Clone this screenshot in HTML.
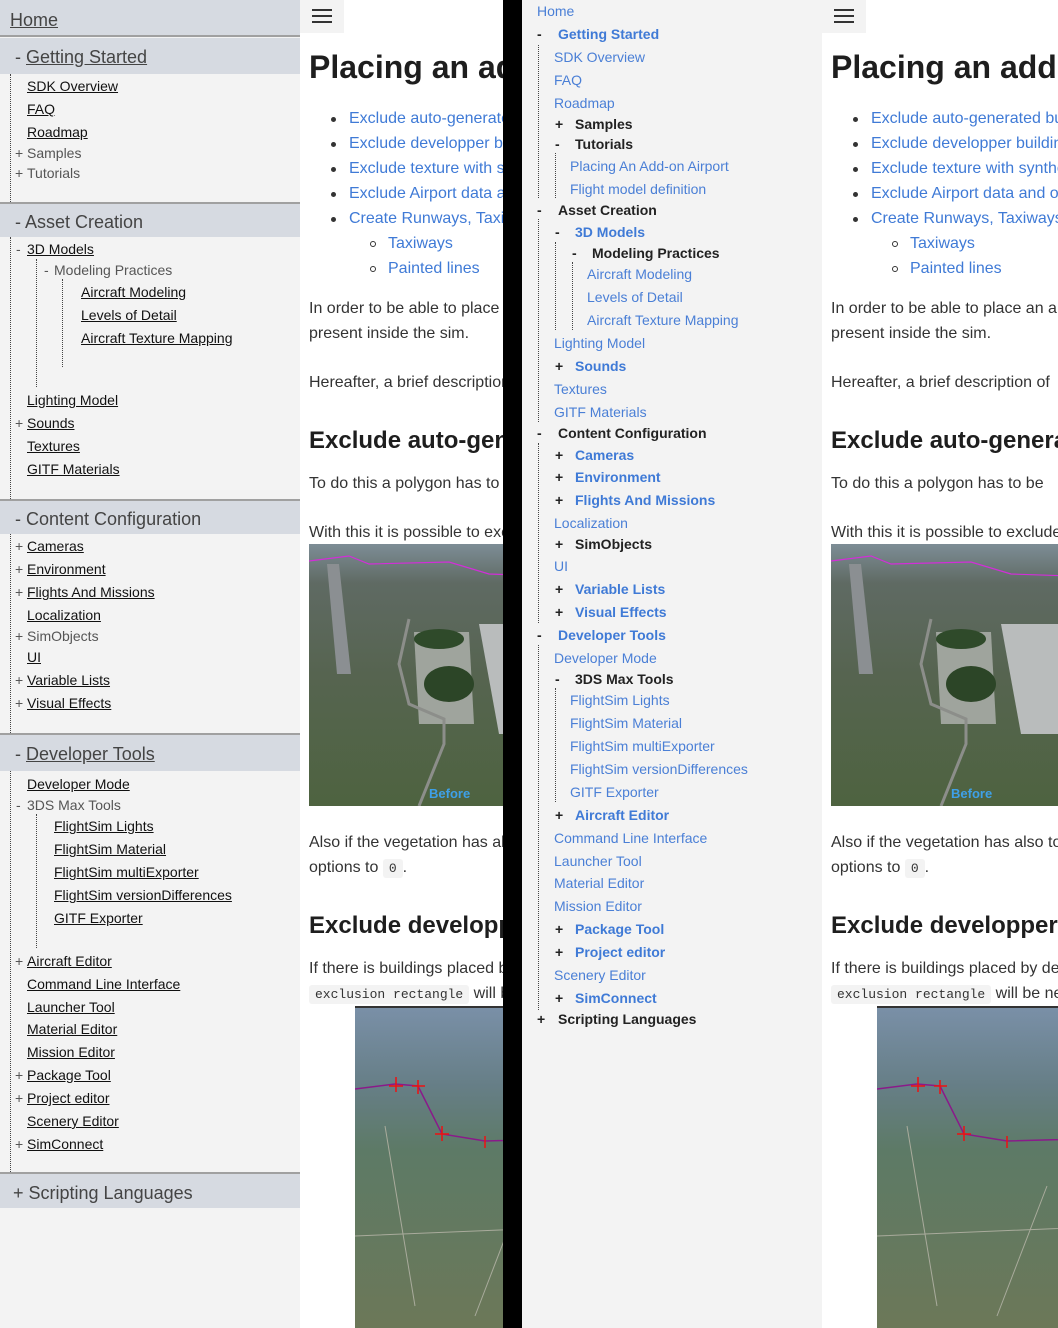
<!DOCTYPE html>
<html><head><meta charset="utf-8">
<style>
*{margin:0;padding:0;box-sizing:border-box}
body{width:1058px;height:1328px;position:relative;overflow:hidden;background:#fff;font-family:"Segoe UI","Liberation Sans",sans-serif;}
.a{position:absolute;white-space:nowrap;height:20px;line-height:20px;font-size:14px}
.sb1{position:absolute;left:0;top:0;width:300px;height:1328px;background:#f3f3f3}
.sb1 .a{color:#000}
.sb1 .l{text-decoration:underline;color:#111}
.sb1 .g{color:#555}
.hd{position:absolute;left:0;width:300px;background:#d6dae1;border-bottom:2px solid #a0a0a0}
.ht{position:absolute;font-size:18px;color:#444;white-space:nowrap;height:24px;line-height:24px}
.dv{position:absolute;width:0;border-left:1px dotted #444}
.sb2{position:absolute;left:522px;top:0;width:300px;height:1328px;background:#f3f3f3}
.sb2 .a{font-size:14px}
.b{color:#4a7fd6}
.bb{color:#3f7ad6;font-weight:bold}
.db{color:#222;font-weight:bold}
.m{color:#222;font-weight:bold}
.pn{position:absolute;top:0;height:1328px;overflow:hidden;background:#fff}
.pn .t{position:absolute;left:9px;white-space:nowrap;font-size:16px;color:#333;height:24px;line-height:24px}
.pn .lk{color:#3f7ad6}
.pn h1{position:absolute;left:9px;top:46px;font-size:32px;font-weight:bold;color:#1e1e1e;white-space:nowrap;line-height:42px}
.pn h2{position:absolute;left:9px;font-size:24px;font-weight:bold;color:#1e1e1e;white-space:nowrap;line-height:32px}
.dot{position:absolute;width:5px;height:5px;border-radius:50%;background:#333}
.cir{position:absolute;width:6px;height:6px;border-radius:50%;border:1px solid #333}
.code{font-family:"Liberation Mono",monospace;font-size:13px;background:#f3f3f3;padding:2px 6px;border-radius:3px;color:#333}
.burger{position:absolute;left:0;top:0;width:44px;height:33px;background:#f3f3f3}
.burger i{position:absolute;left:12px;width:20px;height:2px;background:#333}
</style></head><body>

<div class="sb1">
 <div class="hd" style="top:0;height:37px"></div>
 <div class="ht" style="left:10px;top:8px;text-decoration:underline">Home</div>
 <div class="hd" style="top:38px;height:36px;border-bottom:none"></div>
 <div class="ht" style="left:15px;top:45px">- <u>Getting Started</u></div>
 <div class="dv" style="left:10px;top:74px;height:128px"></div>
 <div class="a l" style="left:27px;top:76px">SDK Overview</div>
 <div class="a l" style="left:27px;top:99px">FAQ</div>
 <div class="a l" style="left:27px;top:122px">Roadmap</div>
 <div class="a g" style="left:15px;top:143px">+</div><div class="a g" style="left:27px;top:143px">Samples</div>
 <div class="a g" style="left:15px;top:163px">+</div><div class="a g" style="left:27px;top:163px">Tutorials</div>

 <div class="hd" style="top:202px;height:35px;border-top:2px solid #a0a0a0;border-bottom:none"></div>
 <div class="ht" style="left:15px;top:210px">- Asset Creation</div>
 <div class="dv" style="left:10px;top:237px;height:262px"></div>
 <div class="a g" style="left:16px;top:239px">-</div><div class="a l" style="left:27px;top:239px">3D Models</div>
 <div class="dv" style="left:36px;top:259px;height:128px"></div>
 <div class="a g" style="left:44px;top:260px">-</div><div class="a g" style="left:54px;top:260px">Modeling Practices</div>
 <div class="dv" style="left:62px;top:279px;height:88px"></div>
 <div class="a l" style="left:81px;top:282px">Aircraft Modeling</div>
 <div class="a l" style="left:81px;top:305px">Levels of Detail</div>
 <div class="a l" style="left:81px;top:328px">Aircraft Texture Mapping</div>
 <div class="a l" style="left:27px;top:390px">Lighting Model</div>
 <div class="a g" style="left:15px;top:413px">+</div><div class="a l" style="left:27px;top:413px">Sounds</div>
 <div class="a l" style="left:27px;top:436px">Textures</div>
 <div class="a l" style="left:27px;top:459px">GITF Materials</div>

 <div class="hd" style="top:499px;height:35px;border-top:2px solid #a0a0a0;border-bottom:none"></div>
 <div class="ht" style="left:15px;top:507px">- Content Configuration</div>
 <div class="dv" style="left:10px;top:534px;height:199px"></div>
 <div class="a g" style="left:15px;top:536px">+</div><div class="a l" style="left:27px;top:536px">Cameras</div>
 <div class="a g" style="left:15px;top:559px">+</div><div class="a l" style="left:27px;top:559px">Environment</div>
 <div class="a g" style="left:15px;top:582px">+</div><div class="a l" style="left:27px;top:582px">Flights And Missions</div>
 <div class="a l" style="left:27px;top:605px">Localization</div>
 <div class="a g" style="left:15px;top:626px">+</div><div class="a g" style="left:27px;top:626px">SimObjects</div>
 <div class="a l" style="left:27px;top:647px">UI</div>
 <div class="a g" style="left:15px;top:670px">+</div><div class="a l" style="left:27px;top:670px">Variable Lists</div>
 <div class="a g" style="left:15px;top:693px">+</div><div class="a l" style="left:27px;top:693px">Visual Effects</div>

 <div class="hd" style="top:733px;height:38px;border-top:2px solid #a0a0a0;border-bottom:none"></div>
 <div class="ht" style="left:15px;top:742px">- <u>Developer Tools</u></div>
 <div class="dv" style="left:10px;top:771px;height:401px"></div>
 <div class="a l" style="left:27px;top:774px">Developer Mode</div>
 <div class="a g" style="left:16px;top:795px">-</div><div class="a g" style="left:27px;top:795px">3DS Max Tools</div>
 <div class="dv" style="left:36px;top:814px;height:134px"></div>
 <div class="a l" style="left:54px;top:816px">FlightSim Lights</div>
 <div class="a l" style="left:54px;top:839px">FlightSim Material</div>
 <div class="a l" style="left:54px;top:862px">FlightSim multiExporter</div>
 <div class="a l" style="left:54px;top:885px">FlightSim versionDifferences</div>
 <div class="a l" style="left:54px;top:908px">GITF Exporter</div>
 <div class="a g" style="left:15px;top:951px">+</div><div class="a l" style="left:27px;top:951px">Aircraft Editor</div>
 <div class="a l" style="left:27px;top:974px">Command Line Interface</div>
 <div class="a l" style="left:27px;top:997px">Launcher Tool</div>
 <div class="a l" style="left:27px;top:1019px">Material Editor</div>
 <div class="a l" style="left:27px;top:1042px">Mission Editor</div>
 <div class="a g" style="left:15px;top:1065px">+</div><div class="a l" style="left:27px;top:1065px">Package Tool</div>
 <div class="a g" style="left:15px;top:1088px">+</div><div class="a l" style="left:27px;top:1088px">Project editor</div>
 <div class="a l" style="left:27px;top:1111px">Scenery Editor</div>
 <div class="a g" style="left:15px;top:1134px">+</div><div class="a l" style="left:27px;top:1134px">SimConnect</div>

 <div class="hd" style="top:1172px;height:36px;border-top:2px solid #a0a0a0;border-bottom:none"></div>
 <div class="ht" style="left:13px;top:1181px">+ Scripting Languages</div>
</div>

<div class="pn" style="left:300px;width:203px">
 <div class="burger"><i style="top:9px"></i><i style="top:15px"></i><i style="top:21px"></i></div>
 <h1>Placing an add-on airport</h1>
 <div class="dot" style="left:31px;top:117px"></div><div class="t lk" style="left:49px;top:107px">Exclude auto-generated buildings</div>
 <div class="dot" style="left:31px;top:142px"></div><div class="t lk" style="left:49px;top:132px">Exclude developper buildings</div>
 <div class="dot" style="left:31px;top:167px"></div><div class="t lk" style="left:49px;top:157px">Exclude texture with synthetic</div>
 <div class="dot" style="left:31px;top:192px"></div><div class="t lk" style="left:49px;top:182px">Exclude Airport data and objects</div>
 <div class="dot" style="left:31px;top:217px"></div><div class="t lk" style="left:49px;top:207px">Create Runways, Taxiways, and</div>
 <div class="cir" style="left:70px;top:241px"></div><div class="t lk" style="left:88px;top:232px">Taxiways</div>
 <div class="cir" style="left:70px;top:266px"></div><div class="t lk" style="left:88px;top:257px">Painted lines</div>
 <div class="t" style="top:297px">In order to be able to place an airport</div>
 <div class="t" style="top:322px">present inside the sim.</div>
 <div class="t" style="top:371px">Hereafter, a brief description of</div>
 <h2 style="top:425px">Exclude auto-generated</h2>
 <div class="t" style="top:472px">To do this a polygon has to be</div>
 <div class="t" style="top:521px">With this it is possible to exclude</div>
 <svg style="position:absolute;left:9px;top:544px" width="240" height="262">
  <defs><linearGradient id="g1" x1="0" y1="0" x2="0" y2="1"><stop offset="0" stop-color="#7d8d96"/><stop offset="0.15" stop-color="#5f6a63"/><stop offset="0.5" stop-color="#566450"/><stop offset="1" stop-color="#4e6340"/></linearGradient></defs>
  <rect width="240" height="262" fill="url(#g1)"/>
  <polygon points="18,20 30,20 42,130 28,130" fill="#8b8f92"/>
  <polygon points="170,80 240,80 240,190 190,190" fill="#b9bcbc"/>
  <polygon points="105,88 160,88 165,180 110,180" fill="#9fa49d"/>
  <ellipse cx="130" cy="95" rx="25" ry="10" fill="#2f4a2a"/>
  <ellipse cx="140" cy="140" rx="25" ry="18" fill="#2c4527"/>
  <path d="M100,75 L90,120 L100,160 L135,175 L135,200 L110,262" stroke="#8c8e8a" stroke-width="3" fill="none"/>
  <path d="M0,17 L40,12 L60,20 L140,18 L180,30 L240,32" stroke="#d22ed8" stroke-width="1.2" fill="none"/>
  <text x="120" y="254" font-family="Liberation Sans" font-weight="bold" font-size="13" fill="#3ea0e8">Before</text>
 </svg>
 <div class="t" style="top:831px">Also if the vegetation has also to be</div>
 <div class="t" style="top:856px">options to <span class="code">0</span>.</div>
 <h2 style="top:910px">Exclude developper buildings</h2>
 <div class="t" style="top:957px">If there is buildings placed by developer</div>
 <div class="t" style="top:982px"><span class="code">exclusion rectangle</span> will be needed</div>
 <svg style="position:absolute;left:55px;top:1006px" width="240" height="322">
  <defs><linearGradient id="g2" x1="0" y1="0" x2="0" y2="1"><stop offset="0" stop-color="#7a90a8"/><stop offset="0.25" stop-color="#667e86"/><stop offset="0.45" stop-color="#5d7a66"/><stop offset="1" stop-color="#6c7858"/></linearGradient></defs>
  <rect width="240" height="322" fill="url(#g2)"/>
  <rect x="0" y="0" width="240" height="2" fill="#333"/>
  <path d="M0,83 L40,78 L63,80 L87,128 L130,135 L240,132" stroke="#8a1a8a" stroke-width="1.5" fill="none"/>
  <path d="M41,71 V86 M34,80 H48 M63,74 V88 M57,80 H70 M87,120 V135 M80,128 H94 M130,130 V142" stroke="#e11" stroke-width="1.5"/>
  <path d="M30,120 L60,300 M0,230 L240,220 M170,180 L120,310" stroke="#a9ab9c" stroke-width="1" fill="none"/>
 </svg>
</div>

<div style="position:absolute;left:503px;top:0;width:19px;height:1328px;background:#000"></div>

<div class="sb2">
 <div class="dv" style="left:16px;top:45px;height:153px"></div>
 <div class="a b" style="left:15px;top:1px">Home</div>
 <div class="a m" style="left:15px;top:24px">-</div><div class="a bb" style="left:36px;top:24px">Getting Started</div>
 <div class="a b" style="left:32px;top:47px">SDK Overview</div>
 <div class="a b" style="left:32px;top:70px">FAQ</div>
 <div class="a b" style="left:32px;top:93px">Roadmap</div>
 <div class="a m" style="left:33px;top:114px">+</div><div class="a db" style="left:53px;top:114px">Samples</div>
 <div class="a m" style="left:33px;top:134px">-</div><div class="a db" style="left:53px;top:134px">Tutorials</div>
 <div class="dv" style="left:33px;top:153px;height:45px"></div>
 <div class="a b" style="left:48px;top:156px">Placing An Add-on Airport</div>
 <div class="a b" style="left:48px;top:179px">Flight model definition</div>
 <div class="a m" style="left:15px;top:200px">-</div><div class="a db" style="left:36px;top:200px">Asset Creation</div>
 <div class="dv" style="left:16px;top:219px;height:203px"></div>
 <div class="a m" style="left:33px;top:222px">-</div><div class="a bb" style="left:53px;top:222px">3D Models</div>
 <div class="dv" style="left:33px;top:242px;height:88px"></div>
 <div class="a m" style="left:50px;top:243px">-</div><div class="a db" style="left:70px;top:243px">Modeling Practices</div>
 <div class="dv" style="left:50px;top:262px;height:68px"></div>
 <div class="a b" style="left:65px;top:264px">Aircraft Modeling</div>
 <div class="a b" style="left:65px;top:287px">Levels of Detail</div>
 <div class="a b" style="left:65px;top:310px">Aircraft Texture Mapping</div>
 <div class="a b" style="left:32px;top:333px">Lighting Model</div>
 <div class="a m" style="left:33px;top:356px">+</div><div class="a bb" style="left:53px;top:356px">Sounds</div>
 <div class="a b" style="left:32px;top:379px">Textures</div>
 <div class="a b" style="left:32px;top:402px">GITF Materials</div>
 <div class="a m" style="left:15px;top:423px">-</div><div class="a db" style="left:36px;top:423px">Content Configuration</div>
 <div class="dv" style="left:16px;top:443px;height:180px"></div>
 <div class="a m" style="left:33px;top:445px">+</div><div class="a bb" style="left:53px;top:445px">Cameras</div>
 <div class="a m" style="left:33px;top:467px">+</div><div class="a bb" style="left:53px;top:467px">Environment</div>
 <div class="a m" style="left:33px;top:490px">+</div><div class="a bb" style="left:53px;top:490px">Flights And Missions</div>
 <div class="a b" style="left:32px;top:513px">Localization</div>
 <div class="a m" style="left:33px;top:534px">+</div><div class="a db" style="left:53px;top:534px">SimObjects</div>
 <div class="a b" style="left:32px;top:556px">UI</div>
 <div class="a m" style="left:33px;top:579px">+</div><div class="a bb" style="left:53px;top:579px">Variable Lists</div>
 <div class="a m" style="left:33px;top:602px">+</div><div class="a bb" style="left:53px;top:602px">Visual Effects</div>
 <div class="a m" style="left:15px;top:625px">-</div><div class="a bb" style="left:36px;top:625px">Developer Tools</div>
 <div class="dv" style="left:16px;top:645px;height:365px"></div>
 <div class="a b" style="left:32px;top:648px">Developer Mode</div>
 <div class="a m" style="left:33px;top:669px">-</div><div class="a db" style="left:53px;top:669px">3DS Max Tools</div>
 <div class="dv" style="left:33px;top:688px;height:114px"></div>
 <div class="a b" style="left:48px;top:690px">FlightSim Lights</div>
 <div class="a b" style="left:48px;top:713px">FlightSim Material</div>
 <div class="a b" style="left:48px;top:736px">FlightSim multiExporter</div>
 <div class="a b" style="left:48px;top:759px">FlightSim versionDifferences</div>
 <div class="a b" style="left:48px;top:782px">GITF Exporter</div>
 <div class="a m" style="left:33px;top:805px">+</div><div class="a bb" style="left:53px;top:805px">Aircraft Editor</div>
 <div class="a b" style="left:32px;top:828px">Command Line Interface</div>
 <div class="a b" style="left:32px;top:851px">Launcher Tool</div>
 <div class="a b" style="left:32px;top:873px">Material Editor</div>
 <div class="a b" style="left:32px;top:896px">Mission Editor</div>
 <div class="a m" style="left:33px;top:919px">+</div><div class="a bb" style="left:53px;top:919px">Package Tool</div>
 <div class="a m" style="left:33px;top:942px">+</div><div class="a bb" style="left:53px;top:942px">Project editor</div>
 <div class="a b" style="left:32px;top:965px">Scenery Editor</div>
 <div class="a m" style="left:33px;top:988px">+</div><div class="a bb" style="left:53px;top:988px">SimConnect</div>
 <div class="a m" style="left:15px;top:1009px">+</div><div class="a db" style="left:36px;top:1009px">Scripting Languages</div>
</div>

<div class="pn" style="left:822px;width:236px">
 <div class="burger"><i style="top:9px"></i><i style="top:15px"></i><i style="top:21px"></i></div>
 <h1>Placing an add-on airport</h1>
 <div class="dot" style="left:31px;top:117px"></div><div class="t lk" style="left:49px;top:107px">Exclude auto-generated buildings</div>
 <div class="dot" style="left:31px;top:142px"></div><div class="t lk" style="left:49px;top:132px">Exclude developper buildings</div>
 <div class="dot" style="left:31px;top:167px"></div><div class="t lk" style="left:49px;top:157px">Exclude texture with synthetic</div>
 <div class="dot" style="left:31px;top:192px"></div><div class="t lk" style="left:49px;top:182px">Exclude Airport data and objects</div>
 <div class="dot" style="left:31px;top:217px"></div><div class="t lk" style="left:49px;top:207px">Create Runways, Taxiways, and</div>
 <div class="cir" style="left:70px;top:241px"></div><div class="t lk" style="left:88px;top:232px">Taxiways</div>
 <div class="cir" style="left:70px;top:266px"></div><div class="t lk" style="left:88px;top:257px">Painted lines</div>
 <div class="t" style="top:297px">In order to be able to place an airport</div>
 <div class="t" style="top:322px">present inside the sim.</div>
 <div class="t" style="top:371px">Hereafter, a brief description of</div>
 <h2 style="top:425px">Exclude auto-generated</h2>
 <div class="t" style="top:472px">To do this a polygon has to be</div>
 <div class="t" style="top:521px">With this it is possible to exclude</div>
 <svg style="position:absolute;left:9px;top:544px" width="240" height="262">
  <defs><linearGradient id="g3" x1="0" y1="0" x2="0" y2="1"><stop offset="0" stop-color="#7d8d96"/><stop offset="0.15" stop-color="#5f6a63"/><stop offset="0.5" stop-color="#566450"/><stop offset="1" stop-color="#4e6340"/></linearGradient></defs>
  <rect width="240" height="262" fill="url(#g3)"/>
  <polygon points="18,20 30,20 42,130 28,130" fill="#8b8f92"/>
  <polygon points="170,80 240,80 240,190 190,190" fill="#b9bcbc"/>
  <polygon points="105,88 160,88 165,180 110,180" fill="#9fa49d"/>
  <ellipse cx="130" cy="95" rx="25" ry="10" fill="#2f4a2a"/>
  <ellipse cx="140" cy="140" rx="25" ry="18" fill="#2c4527"/>
  <path d="M100,75 L90,120 L100,160 L135,175 L135,200 L110,262" stroke="#8c8e8a" stroke-width="3" fill="none"/>
  <path d="M0,17 L40,12 L60,20 L140,18 L180,30 L240,32" stroke="#d22ed8" stroke-width="1.2" fill="none"/>
  <text x="120" y="254" font-family="Liberation Sans" font-weight="bold" font-size="13" fill="#3ea0e8">Before</text>
 </svg>
 <div class="t" style="top:831px">Also if the vegetation has also to be</div>
 <div class="t" style="top:856px">options to <span class="code">0</span>.</div>
 <h2 style="top:910px">Exclude developper buildings</h2>
 <div class="t" style="top:957px">If there is buildings placed by developer</div>
 <div class="t" style="top:982px"><span class="code">exclusion rectangle</span> will be needed</div>
 <svg style="position:absolute;left:55px;top:1006px" width="240" height="322">
  <defs><linearGradient id="g4" x1="0" y1="0" x2="0" y2="1"><stop offset="0" stop-color="#7a90a8"/><stop offset="0.25" stop-color="#667e86"/><stop offset="0.45" stop-color="#5d7a66"/><stop offset="1" stop-color="#6c7858"/></linearGradient></defs>
  <rect width="240" height="322" fill="url(#g4)"/>
  <rect x="0" y="0" width="240" height="2" fill="#333"/>
  <path d="M0,83 L40,78 L63,80 L87,128 L130,135 L240,132" stroke="#8a1a8a" stroke-width="1.5" fill="none"/>
  <path d="M41,71 V86 M34,80 H48 M63,74 V88 M57,80 H70 M87,120 V135 M80,128 H94 M130,130 V142" stroke="#e11" stroke-width="1.5"/>
  <path d="M30,120 L60,300 M0,230 L240,220 M170,180 L120,310" stroke="#a9ab9c" stroke-width="1" fill="none"/>
 </svg>
</div>
</body></html>
